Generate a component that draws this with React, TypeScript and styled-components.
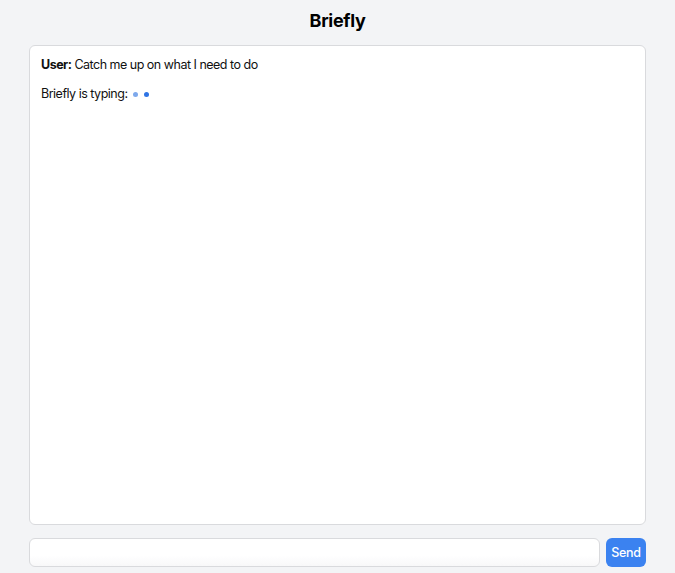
import React from "react";
import styled, { createGlobalStyle } from "styled-components";

const Global = createGlobalStyle`
  html, body { margin: 0; padding: 0; background: #f3f4f6; }
  body { font-family: Inter, "Noto Sans", sans-serif; color: #111; }
`;

const Page = styled.div`
  width: 617px;
  margin: 0 auto;
  padding-top: 9px;
  display: flex;
  flex-direction: column;
`;

const Title = styled.h1`
  margin: 0;
  height: 36px;
  font-size: 18px;
  line-height: 24px;
  font-weight: 700;
  letter-spacing: -0.3px;
  text-align: center;
  color: #000;
`;

const ChatBox = styled.div`
  height: 480px;
  box-sizing: border-box;
  background: #fff;
  border: 1px solid #d9dadd;
  border-radius: 6px;
  padding: 11px 11px;
  display: flex;
  flex-direction: column;
  gap: 13px;
`;

const Line = styled.div`
  font-size: 12.5px;
  letter-spacing: -0.5px;
  line-height: 16px;
  display: flex;
  align-items: center;
  gap: 6px;
`;

const Dot = styled.span<{ $light?: boolean }>`
  width: 5px;
  height: 5px;
  border-radius: 50%;
  background: ${(p) => (p.$light ? "#7ea9ec" : "#2f74e4")};
`;

const InputRow = styled.div`
  margin-top: 13px;
  display: flex;
  gap: 6px;
`;

const Input = styled.input`
  flex: 1;
  height: 29px;
  box-sizing: border-box;
  border: 1px solid #d9dadd;
  border-radius: 6px;
  background: linear-gradient(#fff 60%, #f8f8f9);
  outline: none;
`;

const SendButton = styled.button`
  width: 40px;
  height: 29px;
  border: none;
  border-radius: 6px;
  background: #3b82f0;
  color: #fff;
  font-family: Inter, "Noto Sans", sans-serif;
  font-size: 12.5px;
  font-weight: 500;
  letter-spacing: -0.3px;
  padding: 0;
`;

export default function App() {
  return (
    <>
      <Global />
      <Page>
        <Title>Briefly</Title>
        <ChatBox>
          <Line>
            <span>
              <b>User:</b> Catch me up on what I need to do
            </span>
          </Line>
          <Line>
            <span>Briefly is typing:</span>
            <Dot $light />
            <Dot />
          </Line>
        </ChatBox>
        <InputRow>
          <Input />
          <SendButton>Send</SendButton>
        </InputRow>
      </Page>
    </>
  );
}
